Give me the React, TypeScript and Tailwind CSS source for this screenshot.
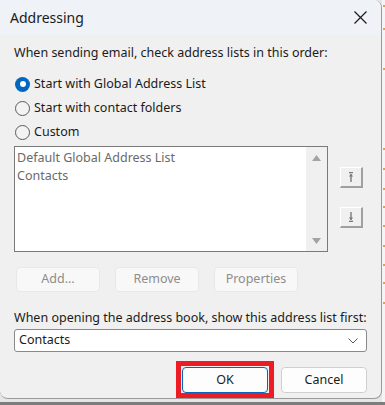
import React from "react";

const font = { fontFamily: '"Noto Sans", "Open Sans", Arial, sans-serif' };

function Radio({ checked, label }: { checked?: boolean; label: string }) {
  return (
    <div className="flex h-[24px] items-center">
      {checked ? (
        <span className="flex h-[15px] w-[15px] items-center justify-center rounded-full bg-[#0067c0]">
          <span className="h-[6px] w-[6px] rounded-full bg-white" />
        </span>
      ) : (
        <span className="h-[15px] w-[15px] rounded-full border border-[#5c5c5c] bg-[#f3f3f3]" />
      )}
      <span className="ml-[4px] text-[12.5px] text-[#1b1b1b]">{label}</span>
    </div>
  );
}

function ArrowBtn({ up }: { up?: boolean }) {
  return (
    <div className="flex h-[21px] w-[23px] items-center justify-center border-t border-l border-t-white border-l-white border-r-2 border-b-2 border-r-[#a0a0a0] border-b-[#a0a0a0] bg-[#f0f0f0]">
      <svg width="6" height="10" viewBox="0 0 6 10">
        {up ? (
          <g fill="#7a7a7a">
            <rect x="1" y="0" width="4" height="1.3" />
            <rect x="2.3" y="2" width="1.4" height="8" />
            <polygon points="3,2 0.8,4.6 5.2,4.6" />
          </g>
        ) : (
          <g fill="#7a7a7a">
            <rect x="1" y="8.7" width="4" height="1.3" />
            <rect x="2.3" y="0" width="1.4" height="8" />
            <polygon points="3,8 0.8,5.4 5.2,5.4" />
          </g>
        )}
      </svg>
    </div>
  );
}

function DisabledBtn({ label }: { label: string }) {
  return (
    <div className="flex h-[25px] w-[84px] items-center justify-center rounded-[4px] border border-[#e8e8e8] bg-[#f8f8f8] text-[12.5px] text-[#8d8d8d]">
      {label}
    </div>
  );
}

export default function App() {
  return (
    <div className="relative h-[405px] w-[385px] overflow-hidden bg-[#e6e6e6]" style={font}>
      <div className="absolute right-0 top-0 h-full w-[3px] bg-[#f4f4f4]">
        <div className="absolute left-[1px] top-[5px] h-[2px] w-[2px] bg-[#e8a040]" />
        <div className="absolute left-[1px] top-[28px] h-[2px] w-[2px] bg-[#e8a040]" />
        <div className="absolute left-[1px] top-[68px] h-[2px] w-[2px] bg-[#e8a040]" />
        <div className="absolute left-[1px] top-[148px] h-[2px] w-[2px] bg-[#e8a040]" />
        <div className="absolute left-[1px] top-[168px] h-[2px] w-[2px] bg-[#e8a040]" />
        <div className="absolute left-[1px] top-[188px] h-[2px] w-[2px] bg-[#e8a040]" />
        <div className="absolute left-[1px] top-[206px] h-[2px] w-[2px] bg-[#e8a040]" />
        <div className="absolute left-[1px] top-[225px] h-[2px] w-[2px] bg-[#e8a040]" />
        <div className="absolute left-[1px] top-[245px] h-[2px] w-[2px] bg-[#e8a040]" />
        <div className="absolute left-[1px] top-[264px] h-[2px] w-[2px] bg-[#e8a040]" />
        <div className="absolute left-[1px] top-[282px] h-[2px] w-[2px] bg-[#e8a040]" />
        <div className="absolute left-[1px] top-[302px] h-[2px] w-[2px] bg-[#e8a040]" />
      </div>
      <div className="absolute bottom-0 left-0 h-[3px] w-full bg-[#7d7d7d]" />

      <div className="relative flex h-[399px] w-[382px] flex-col overflow-hidden rounded-tr-[8px] rounded-br-[8px] rounded-bl-[8px] border-r border-b border-[#9a9a9a] bg-[#f0f0f0]">
        <div className="flex h-[35px] shrink-0 items-center justify-between bg-[#eff2f6] pl-[10px] pr-[14px]">
          <span className="text-[14px] text-[#1b1b1b]">Addressing</span>
          <svg width="13" height="13" viewBox="0 0 13 13">
            <path d="M0.5 0.5 L12.5 12.5 M12.5 0.5 L0.5 12.5" stroke="#1b1b1b" strokeWidth="1.2" />
          </svg>
        </div>

        <div className="flex flex-col px-[14px] pt-[9px]">
          <div className="flex h-[18px] items-center text-[12.5px] text-[#1b1b1b]">
            When sending email, check address lists in this order:
          </div>
          <div className="mt-[10px] flex flex-col pl-[1px]">
            <Radio checked label="Start with Global Address List" />
            <Radio label="Start with contact folders" />
            <Radio label="Custom" />
          </div>

          <div className="mt-[2px] flex items-start">
            <div className="flex h-[106px] w-[314px] border border-[#7a7a7a] bg-white">
              <div className="flex flex-1 flex-col pl-[2px] pt-[2px] text-[12.5px] leading-[18px] text-[#6a6a6a]">
                <span>Default Global Address List</span>
                <span>Contacts</span>
              </div>
              <div className="flex w-[21px] flex-col items-center justify-between bg-[#f0f0f0] pb-[7px] pt-[8px]">
                <svg width="9" height="6" viewBox="0 0 9 6">
                  <polygon points="4.5,0 9,6 0,6" fill="#a3a3a3" />
                </svg>
                <svg width="9" height="6" viewBox="0 0 9 6">
                  <polygon points="0,0 9,0 4.5,6" fill="#a3a3a3" />
                </svg>
              </div>
            </div>
            <div className="ml-[12px] mt-[21px] flex flex-col gap-[19px]">
              <ArrowBtn up />
              <ArrowBtn />
            </div>
          </div>

          <div className="ml-[2px] mt-[15px] flex gap-[15px]">
            <DisabledBtn label="Add..." />
            <DisabledBtn label="Remove" />
            <DisabledBtn label="Properties" />
          </div>

          <div className="mt-[17px] flex h-[18px] items-center text-[12.5px] text-[#1b1b1b]">
            When opening the address book, show this address list first:
          </div>
          <div className="mt-[2px] flex h-[23px] items-center justify-between rounded-[3px] border border-[#8a8a8a] bg-white pl-[4px] pr-[8px]">
            <span className="text-[12.5px] text-[#1b1b1b]">Contacts</span>
            <svg width="10" height="6" viewBox="0 0 10 6">
              <path d="M0.5 0.5 L5 5 L9.5 0.5" stroke="#5a5a5a" fill="none" strokeWidth="1" />
            </svg>
          </div>

          <div className="mt-[15px] flex justify-end gap-[13px]">
            <div className="relative">
              <div className="flex h-[26px] w-[86px] items-center justify-center rounded-[4px] border border-[#0067c0] bg-[#fdfdfd] text-[12.5px] text-[#1b1b1b]">
                OK
              </div>
              <div className="pointer-events-none absolute -left-[6px] -top-[6px] h-[37px] w-[98px] border-[5px] border-[#ed1c24]" />
            </div>
            <div className="flex h-[26px] w-[86px] items-center justify-center rounded-[4px] border border-[#d0d0d0] bg-[#fdfdfd] text-[12.5px] text-[#1b1b1b]">
              Cancel
            </div>
          </div>
        </div>
      </div>
    </div>
  );
}
